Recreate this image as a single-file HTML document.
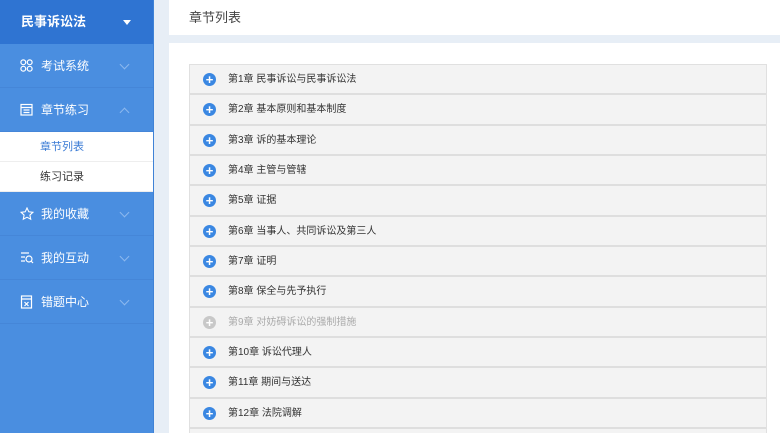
<!DOCTYPE html>
<html><head><meta charset="utf-8"><style>
*{margin:0;padding:0;box-sizing:border-box}
html,body{width:780px;height:433px;overflow:hidden}
body{background:#e7eef6;font-family:"Liberation Sans","Noto Sans CJK SC",sans-serif;position:relative}
.side{position:absolute;left:0;top:0;width:154px;height:433px;background:#4a8ee0;border-right:1px solid #3f82d6}
.top{height:44px;background:#2f74d2;color:#fff;font-weight:bold;font-size:13px;line-height:44px;padding-left:21px;position:relative}
.top:after{content:"";position:absolute;right:22px;top:20px;border:4px solid transparent;border-top:5px solid #fff}
.item{height:44px;border-bottom:1px solid #4586d8;color:#fff;font-size:12px;line-height:44px;padding-left:41px;position:relative}
.item svg{position:absolute;left:20px;top:15px}
.item .ch{position:absolute;left:121px;top:17px;width:7px;height:7px;border-right:1px solid #8cb8ee;border-bottom:1px solid #8cb8ee;transform:rotate(45deg)}
.item .up{transform:rotate(-135deg);top:21px}
.sub{height:30px;background:#fff;font-size:11px;line-height:30px;padding-left:40px;color:#333;border-bottom:1px solid #eee}
.hdr{position:absolute;left:169px;top:0;width:611px;height:35px;background:#fff;font-size:13px;color:#444;line-height:35px;padding-left:20px}
.main{position:absolute;left:169px;top:43px;width:611px;height:390px;background:#fff;overflow:hidden}
.list{position:absolute;left:20px;top:21px;width:578px;border:1px solid #e0e0e0;border-bottom:none}
.row{height:30.33px;background:#f3f3f3;border-bottom:2px solid #dedede;font-size:10px;color:#333;line-height:30px;padding-left:38px;position:relative}
.row:before{content:"+";position:absolute;left:13px;top:8px;width:13px;height:13px;border-radius:50%;background:#3a87e2;color:#fff;font-size:13px;font-weight:bold;line-height:13px;text-align:center}
.row.dis{color:#aaa}.row.dis:before{background:#c8c8c8}
</style></head><body>
<div class="side">
<div class="top">民事诉讼法</div>
<div class="item"><svg width="13" height="13" viewBox="0 0 13 13" fill="none" stroke="#fff" stroke-width="1.2"><circle cx="3.3" cy="3.3" r="2.4"/><circle cx="9.7" cy="3.3" r="2.4"/><circle cx="3.3" cy="9.7" r="2.4"/><circle cx="9.7" cy="9.7" r="2.4"/></svg>考试系统<span class="ch"></span></div>
<div class="item"><svg width="13" height="13" viewBox="0 0 13 13" fill="none" stroke="#fff" stroke-width="1.2"><rect x="1" y="1.5" width="11" height="10.5"/><path d="M1 4.5h11M3.5 7h6M3.5 9.5h6"/></svg>章节练习<span class="ch up"></span></div>
<div class="sub" style="color:#3a7bd5">章节列表</div>
<div class="sub">练习记录</div>
<div class="item"><svg width="14" height="14" viewBox="0 0 14 14" fill="none" stroke="#fff" stroke-width="1.1"><path d="M7 1l1.8 3.8 4.1.5-3 2.8.8 4.1L7 10.2 3.3 12.2l.8-4.1-3-2.8 4.1-.5z"/></svg>我的收藏<span class="ch"></span></div>
<div class="item"><svg width="14" height="13" viewBox="0 0 14 13" fill="none" stroke="#fff" stroke-width="1.2"><path d="M1 2h8M1 6h4M1 10h4"/><circle cx="9" cy="8" r="3"/><path d="M11 10l2 2"/></svg>我的互动<span class="ch"></span></div>
<div class="item"><svg width="13" height="14" viewBox="0 0 13 14" fill="none" stroke="#fff" stroke-width="1.2"><rect x="1.5" y="1" width="10" height="12"/><path d="M1.5 4h10M4.5 7l4 4M8.5 7l-4 4"/></svg>错题中心<span class="ch"></span></div>
</div>
<div class="hdr">章节列表</div>
<div class="main"><div class="list">
<div class="row">第1章 民事诉讼与民事诉讼法</div>
<div class="row">第2章 基本原则和基本制度</div>
<div class="row">第3章 诉的基本理论</div>
<div class="row">第4章 主管与管辖</div>
<div class="row">第5章 证据</div>
<div class="row">第6章 当事人、共同诉讼及第三人</div>
<div class="row">第7章 证明</div>
<div class="row">第8章 保全与先予执行</div>
<div class="row dis">第9章 对妨碍诉讼的强制措施</div>
<div class="row">第10章 诉讼代理人</div>
<div class="row">第11章 期间与送达</div>
<div class="row">第12章 法院调解</div>
<div class="row"></div>
</div></div>
</body></html>
